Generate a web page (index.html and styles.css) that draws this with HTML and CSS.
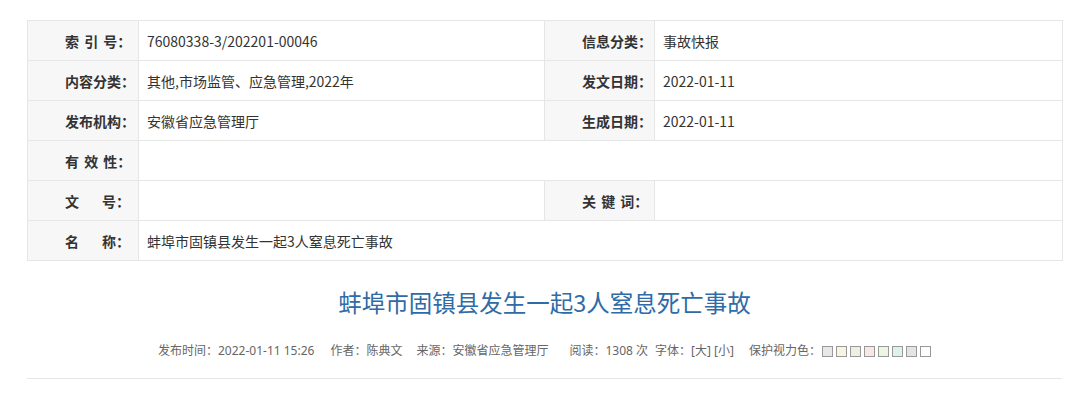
FILE: index.html
```html
<!DOCTYPE html>
<html lang="zh-CN">
<head>
<meta charset="utf-8">
<title>蚌埠市固镇县发生一起3人窒息死亡事故</title>
<link rel="stylesheet" href="styles.css">
</head>
<body>
<div class="page">
  <table class="info">
    <colgroup>
      <col class="c-label1"><col class="c-val1"><col class="c-label2"><col class="c-val2">
    </colgroup>
    <tr>
      <th class="spaced">索 引 号：</th><td>76080338-3/202201-00046</td>
      <th>信息分类：</th><td>事故快报</td>
    </tr>
    <tr>
      <th>内容分类：</th><td>其他,市场监管、应急管理,2022年</td>
      <th>发文日期：</th><td>2022-01-11</td>
    </tr>
    <tr>
      <th>发布机构：</th><td>安徽省应急管理厅</td>
      <th>生成日期：</th><td>2022-01-11</td>
    </tr>
    <tr>
      <th class="spaced">有 效 性：</th><td colspan="3"></td>
    </tr>
    <tr>
      <th><span class="sp">文</span>号：</th><td></td>
      <th class="spaced">关 键 词：</th><td></td>
    </tr>
    <tr>
      <th><span class="sp">名</span>称：</th><td colspan="3">蚌埠市固镇县发生一起3人窒息死亡事故</td>
    </tr>
  </table>

  <h1 class="title">蚌埠市固镇县发生一起3人窒息死亡事故</h1>

  <div class="meta">
    <span class="item g-time">发布时间：2022-01-11 15:26</span>
    <span class="item g-author">作者：陈典文</span>
    <span class="item g-source">来源：安徽省应急管理厅</span>
    <span class="item g-read">阅读：1308 次</span>
    <span class="item g-font">字体：[大] [小]</span>
    <span class="item g-color">保护视力色：</span>
    <span class="swatches">
      <i class="sw s1"></i><i class="sw s2"></i><i class="sw s3"></i><i class="sw s4"></i><i class="sw s5"></i><i class="sw s6"></i><i class="sw s7"></i><i class="sw s8"></i>
    </span>
  </div>
</div>
</body>
</html>
```

FILE: styles.css
```css
html, body {
  margin: 0;
  padding: 0;
  background: #fff;
}
body {
  font-family: "Noto Sans CJK SC", "Noto Sans", sans-serif;
  color: #333;
}
.page {
  width: 1035px;
  margin-left: 27px;
  padding-top: 20px;
}
.info {
  width: 1035px;
  border-collapse: collapse;
  table-layout: fixed;
  font-size: 14px;
}
.c-label1 { width: 111px; }
.c-val1 { width: 406px; }
.c-label2 { width: 110px; }
.c-val2 { width: 408px; }
.info th, .info td {
  border: 1px solid #e6e6e6;
  height: 40px;
  box-sizing: border-box;
  padding: 0;
  line-height: 20px;
  white-space: nowrap;
  font-size: 14px;
}
.info th {
  background: #f7f7f7;
  text-align: left;
  padding-left: 37px;
  font-weight: bold;
  color: #333;
}
.info th.spaced {
  word-spacing: 2px;
}
.info td {
  text-align: left;
  padding-left: 8px;
  color: #333;
}
.sp {
  display: inline-block;
  width: 37px;
  text-align: left;
}
.title {
  margin: 21px 0 0;
  font-size: 23.5px;
  line-height: 40px;
  font-weight: normal;
  text-align: center;
  color: #2f6ba6;
}
.meta {
  margin-top: 19px;
  font-family: "Noto Sans", "Noto Sans CJK SC", sans-serif;
  font-size: 12px;
  line-height: 20px;
  color: #666;
  padding-bottom: 17px;
  border-bottom: 1px solid #e6e6e6;
  display: flex;
  justify-content: center;
  align-items: center;
}
.g-time { margin-right: 16px; }
.g-author { margin-right: 14px; }
.g-source { margin-right: 21px; }
.g-read { margin-right: 7px; }
.g-font { margin-right: 15px; }
.g-color { margin-right: 1px; }
.swatches {
  display: inline-flex;
  gap: 3px;
}
.sw {
  display: inline-block;
  width: 9px;
  height: 9px;
  border: 1px solid #999;
}
.s1 { background: #e8e8e8; }
.s2 { background: #f7f4e4; }
.s3 { background: #eeeee4; }
.s4 { background: #f6e9e3; }
.s5 { background: #eef6e2; }
.s6 { background: #dcf2ef; }
.s7 { background: #e4e4e4; }
.s8 { background: #fdfdfd; }
```
